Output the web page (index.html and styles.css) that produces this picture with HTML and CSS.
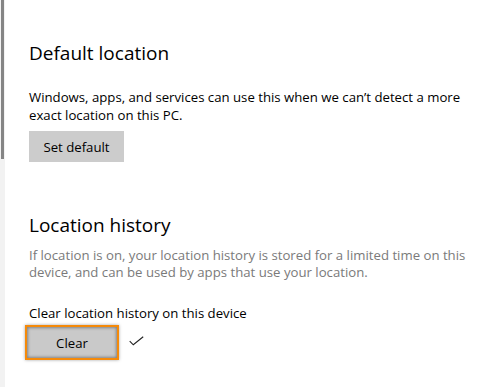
FILE: index.html
```html
<!DOCTYPE html>
<html>
<head>
<meta charset="utf-8">
<link rel="stylesheet" href="styles.css">
</head>
<body>
<div class="page">
  <div class="scrollbar"><div class="thumb"></div></div>
  <main class="content">
    <section class="section first">
      <h2 class="title">Default location</h2>
      <p class="text">Windows, apps, and services can use this when we can’t detect a more exact location on this PC.</p>
      <button class="btn set-default">Set default</button>
    </section>
    <section class="section second">
      <h2 class="title">Location history</h2>
      <p class="text muted">If location is on, your location history is stored for a limited time on this device, and can be used by apps that use your location.</p>
      <p class="label">Clear location history on this device</p>
      <div class="clear-row">
        <div class="focus-ring"><button class="btn clear">Clear</button></div>
        <svg class="check" width="15" height="10" viewBox="0 0 15 10"><path d="M0.7 5.2 L4.3 8.8 L14.2 0.7" fill="none" stroke="#222" stroke-width="1.1"/></svg>
      </div>
    </section>
  </main>
</div>
</body>
</html>
```
FILE: styles.css
```css
html, body {
  margin: 0;
  padding: 0;
  background: #ffffff;
}
.page {
  display: flex;
  height: 387px;
  overflow: hidden;
  font-family: "Open Sans", "Noto Sans", sans-serif;
  color: #000;
}
.scrollbar {
  width: 5px;
  background: #f2f2f2;
  flex: none;
  padding-left: 1px;
  box-sizing: border-box;
}
.thumb {
  width: 3px;
  height: 159px;
  background: #858585;
}
.content {
  padding-left: 24px;
  flex: 1;
}
.title {
  margin: 0;
  font-weight: 400;
  font-size: 19px;
  line-height: 26px;
}
.first .title {
  margin-top: 40px;
}
.text {
  margin: 22px 0 0;
  font-size: 13.2px;
  line-height: 18px;
  padding-right: 16px;
}
.muted {
  color: #7a7a7a;
  margin-top: 9px;
  line-height: 17px;
}
.btn {
  font-family: inherit;
  font-size: 13.2px;
  color: #000;
  background: #cccccc;
  border: none;
  padding: 0;
  display: block;
}
.set-default {
  margin-top: 7px;
  width: 95px;
  height: 31px;
}
.second .title {
  margin-top: 50px;
}
.label {
  margin: 24px 0 0;
  font-size: 13.2px;
  line-height: 17px;
}
.clear-row {
  display: flex;
  align-items: center;
  margin-top: 3px;
  margin-left: -4px;
}
.focus-ring {
  border: 2px solid #f58a0a;
  padding: 0;
  box-shadow: 0 0 3px rgba(0,0,0,0.35);
}
.clear {
  width: 90px;
  height: 31px;
  background: #c9c9c9;
  box-shadow: inset 0 0 3px 1px rgba(0,0,0,0.35);
}
.check {
  margin-left: 10px;
  margin-top: -3px;
}
```
